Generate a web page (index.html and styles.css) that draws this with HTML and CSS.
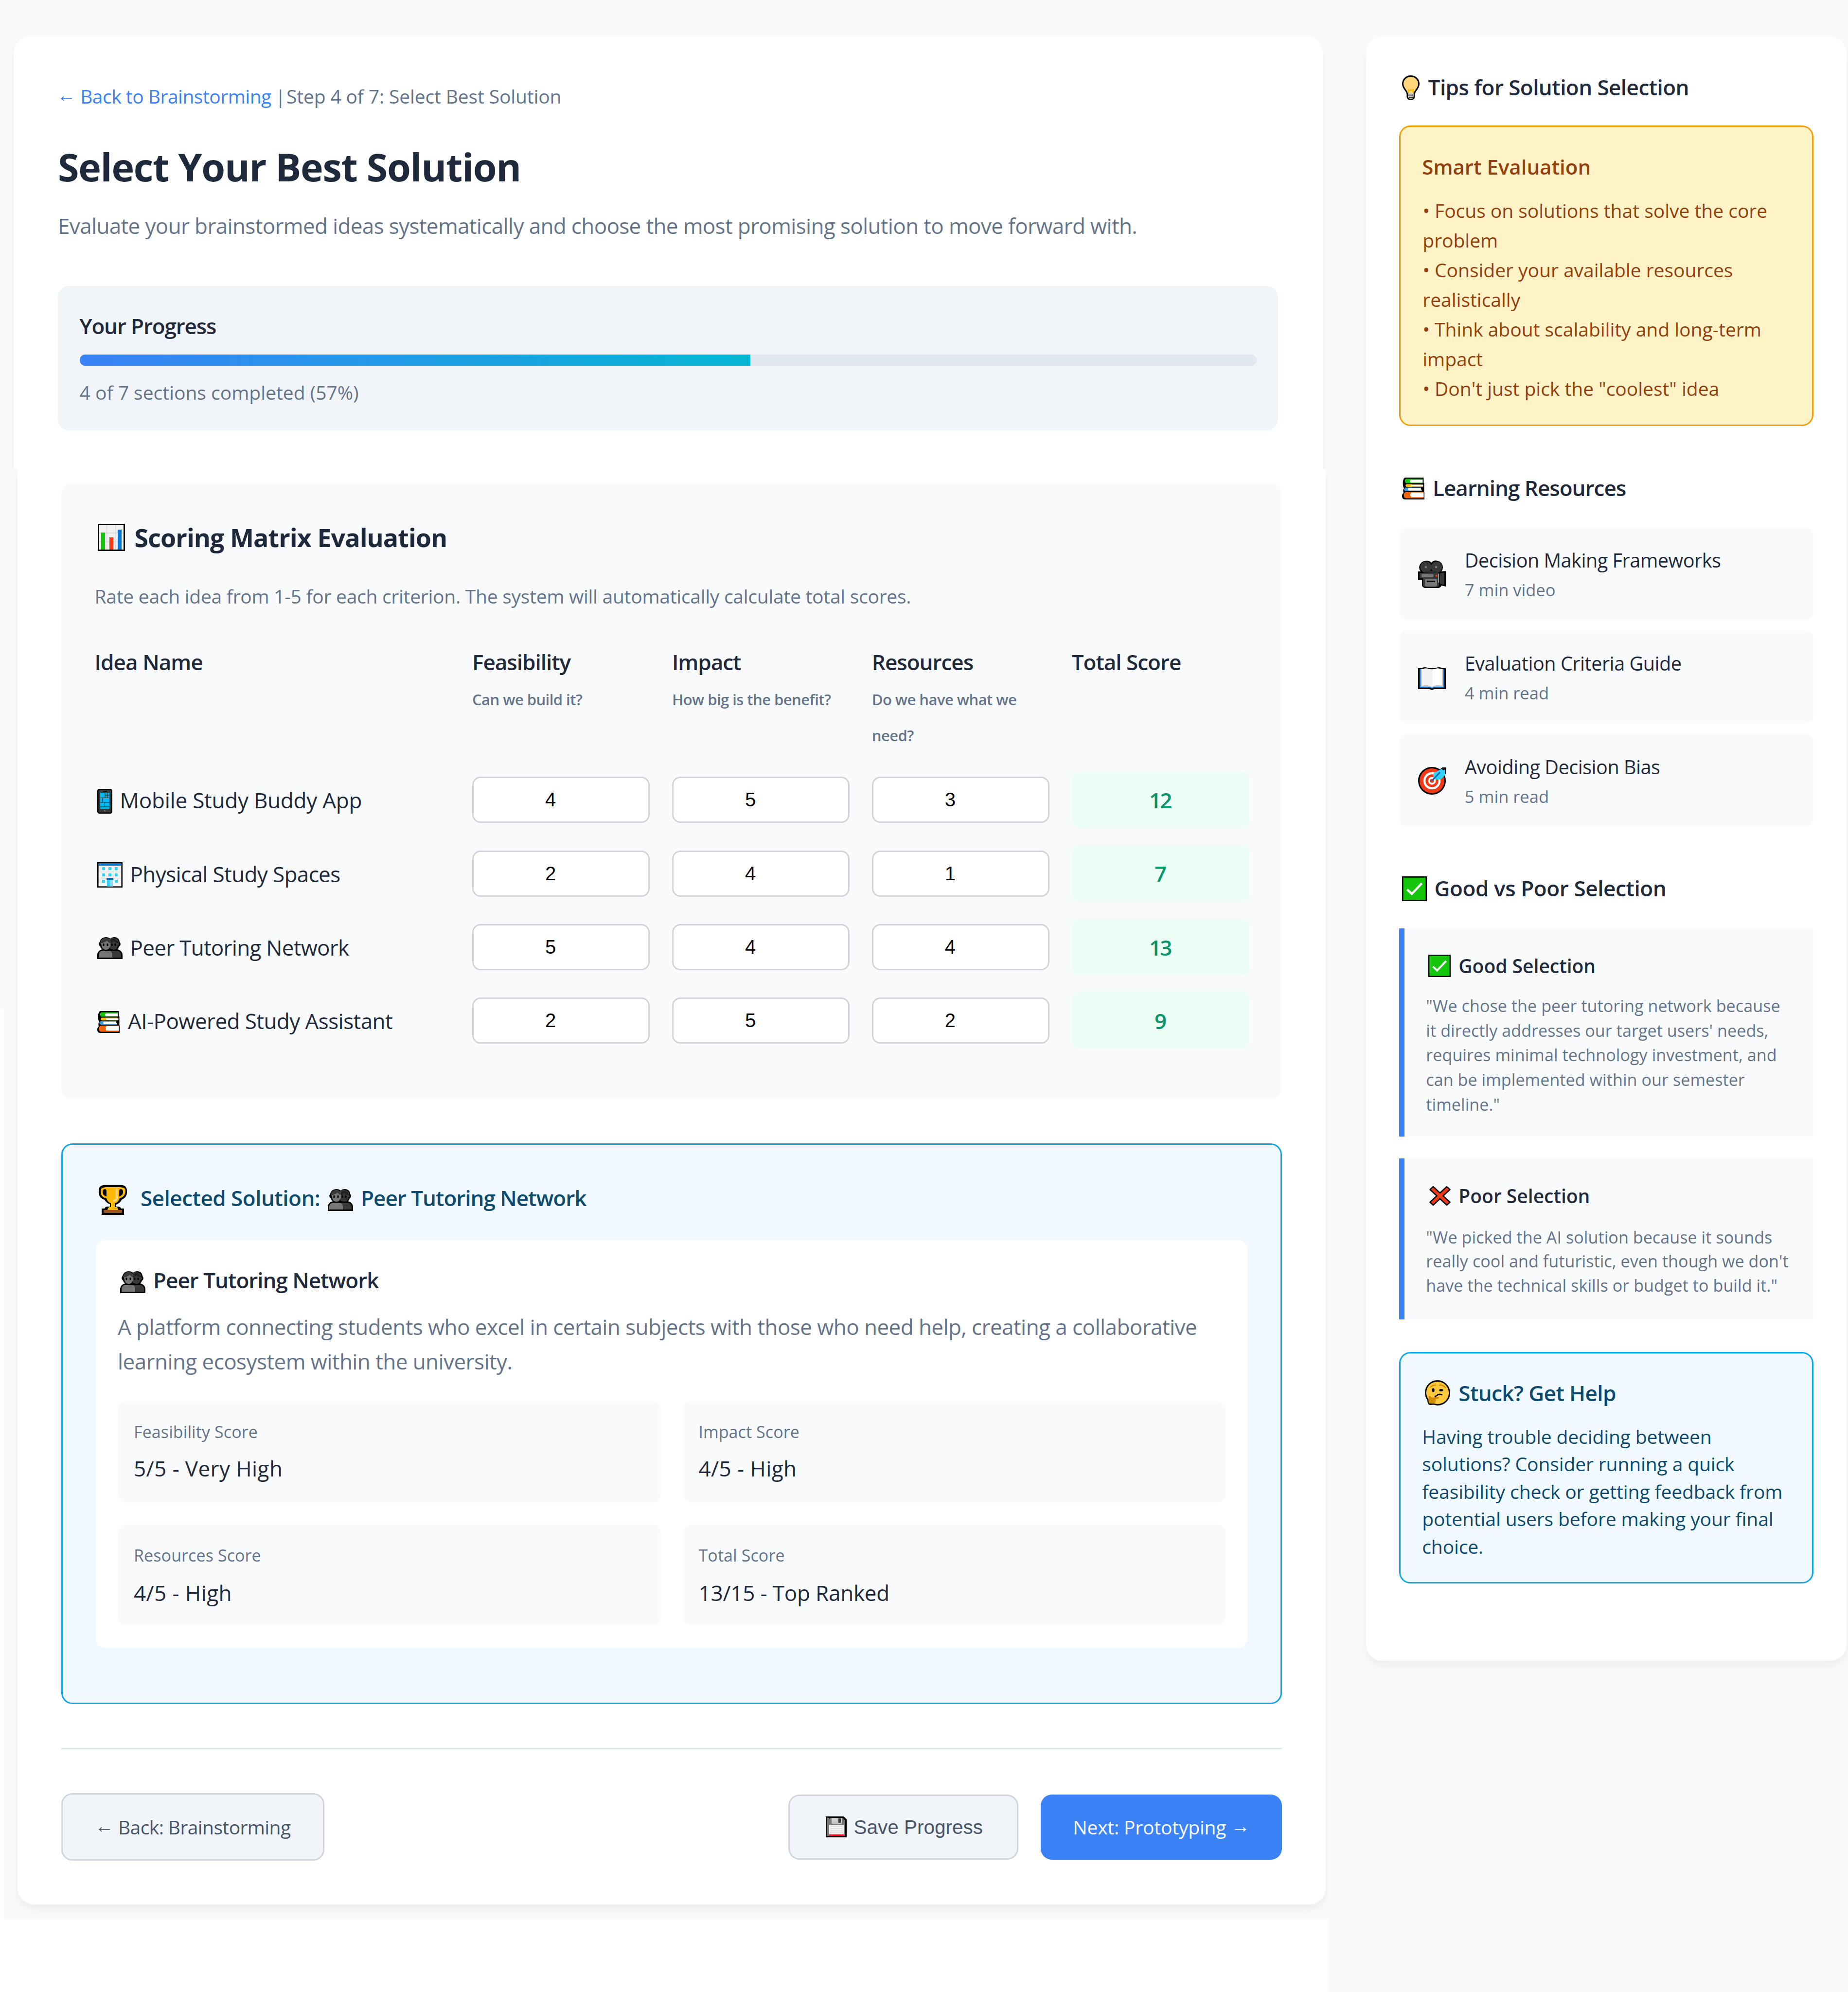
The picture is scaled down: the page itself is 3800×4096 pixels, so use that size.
FILE: index.html
```html
<!DOCTYPE html>
<html lang="en">
<head>
<meta charset="utf-8">
<title>Select Best Solution</title>
<link rel="stylesheet" href="styles.css">
</head>
<body>
<svg class="sprite" xmlns="http://www.w3.org/2000/svg">
  <symbol id="bulb" viewBox="0 0 36 51" preserveAspectRatio="none">
    <path d="M18 1.5C8.5 1.5 1.5 8.500 1.500 17.500c0 6 3 9.500 6 13.500 2.500 3.500 3.500 5 3.500 8.500v4.500c0 3.500 3.500 5.500 7 5.500s7-2 7-5.500v-4.500c0-3.500 1-5 3.500-8.500 3-4 6-7.500 6-13.500C34.500 8.500 27.500 1.500 18 1.500z" fill="#ffd679" stroke="#000" stroke-width="3"/>
    <path d="M13 28v9M23 28v9M13 29.500l2.500 2 2.500-2 2.500 2 2.500-2" fill="none" stroke="#ffb900" stroke-width="2.200"/>
    <path d="M12.500 37h11v8q-5.500 5-11 0z" fill="#ccc"/>
    <path d="M11 40.500h11M14 45h11" stroke="#000" stroke-width="1.400"/>
  </symbol>
  <symbol id="books" viewBox="0 0 46 45" preserveAspectRatio="none">
    <path d="M6 0h38v11h1v19h-1l2 0v15H6c-4 0-6-3-6-7 0-3 1-5 3-6-1-4-1-8 1-10C1 19 0 3 6 0z" fill="#000"/>
    <path d="M8 2.500h34v1.700H18q-4 3 0 6h24v1.300H8q-5-4.500 0-9z" fill="#16c60c"/>
    <path d="M18 4.500h24v6H18q-5-3 0-6z" fill="#fff"/>
    <path d="M9 13.500h33v1H20q-3 2.200 0 4h22v.8H9q-4-3 0-5.800z" fill="#ffb900"/>
    <path d="M19 14.700h24v3.800H19q-3-2 0-3.800z" fill="#fff"/>
    <path d="M7 20.500h32v1H14q-4 2.500 0 5h26v1.500H7q-6-3.700 0-7.500z" fill="#3a96dd"/>
    <path d="M14 21.500h24l2 5.300H14q-5-2.500 0-5.300z" fill="#fff"/>
    <path d="M8 29.700h36v1.200H19q-5 4.500 0 9h25v2.500H8c-6 0-6-12.500 0-12.700z" fill="#f7630c"/>
    <path d="M19 30.800h25v9.400H19q-5-4.700 0-9.400z" fill="#fff"/>
  </symbol>
  <symbol id="camera" viewBox="0 0 57 57" preserveAspectRatio="none">
    <path d="M15 1q8-1 12 4 5-6 13-4 11 3 11 14-1 6-3 8l9-1v32l-9-2q-1 4-6 5H14q-5-1-6-5V40H0V23h5q-3-4-3-9Q4 3 15 1z" fill="#000"/>
    <circle cx="16" cy="14" r="11.500" fill="#383838"/><circle cx="38" cy="14" r="11.500" fill="#383838"/>
    <path d="M16 22h24v5H16z" fill="#383838"/><path d="M15 24.500h23" stroke="#222" stroke-width="2.500"/>
    <circle cx="16" cy="14" r="2.500" fill="#777"/><circle cx="37" cy="14" r="2.500" fill="#777"/>
    <path d="M3 26h40v11H3z" fill="#383838"/><rect x="7" y="28.500" width="25" height="6.500" rx="3" fill="#767676"/>
    <path d="M10 37h33v14q-1 4-4 4H16q-5 0-6-4z" fill="#383838"/>
    <path d="M14 39h25v13q-2 2-4 2H18q-3 0-4-2z" fill="#767676"/><path d="M18 43.500h17" stroke="#111" stroke-width="3"/>
    <circle cx="37.500" cy="32" r="2" fill="#f03a17"/>
    <path d="M42.500 28v18" stroke="#ccc" stroke-width="1.500"/><path d="M45 27l9-2v26l-9-3z" fill="#383838"/>
  </symbol>
  <symbol id="openbook" viewBox="0 0 57 47" preserveAspectRatio="none">
    <path d="M0 2h6q8-4 16 0h13q8-4 16 0h6v43H33q-4.500 3-9 0H0z" fill="#000"/>
    <path d="M3 4.500h51V42H32q-3.500 3-7 0H3z" fill="#0078d7"/>
    <path d="M5 4h47v36H32l-3.500 2-3.500-2H5z" fill="#ccc"/>
    <path d="M8 4q8-3 14-.5 5 1 6.500 3.500V40Q25 36 8 37.500z" fill="#f2f2f2"/>
    <path d="M49 4q-8-3-14-.5-5 1-6.500 3.500V40Q32 36 49 37.500z" fill="#fff"/>
  </symbol>
  <symbol id="target" viewBox="0 0 57 57" preserveAspectRatio="none">
    <circle cx="28.500" cy="28.500" r="27" fill="#f03a17" stroke="#000" stroke-width="3"/>
    <path d="M38 10L50 1h7v13l-5 8z" fill="#000"/>
    <circle cx="28.500" cy="28.500" r="15.500" fill="none" stroke="#fff" stroke-width="4.500"/>
    <circle cx="28.500" cy="28.500" r="6" fill="#f03a17" stroke="#fff" stroke-width="3.800"/>
    <path d="M31 25l.5-12L49 3.500l1.500 3.500 4.500-1v11q-6 10-16 9z" fill="#31d2f7"/>
    <path d="M28.500 28.500L45 11" stroke="#0063b1" stroke-width="2.800"/>
  </symbol>
  <symbol id="check" viewBox="0 0 51 51" preserveAspectRatio="none">
    <rect x="1.300" y="1.300" width="48.400" height="48.400" fill="#16c60c" stroke="#000" stroke-width="2.600"/>
    <path d="M10.500 27l9.500 9L40.500 14.500" fill="none" stroke="#fff" stroke-width="4.500"/>
  </symbol>
  <symbol id="cross" viewBox="0 0 44 42" preserveAspectRatio="none">
    <path d="M8 2l14 13L36 2l6.500 6-14 13 14 13-6.500 6-14-13L8 40l-6.500-6 14-13-14-13z" fill="#f03a17" stroke="#000" stroke-width="2.400" stroke-linejoin="round"/>
  </symbol>
  <symbol id="thinking" viewBox="0 0 52 52" preserveAspectRatio="none">
    <path d="M26 1.500C12 1.500 1.500 12 1.500 26c0 7 3 12 5 15 0 5 1 8 4 8.500l8-.5c3 1 5 1.500 7.500 1.500 14 0 24.500-11 24.500-24.500S39.500 1.500 26 1.500z" fill="#ffc83d" stroke="#000" stroke-width="2.800"/>
    <path d="M12 14q4-4 10-4M30 10q6-1 12 5" fill="none" stroke="#d18b00" stroke-width="2.500" stroke-linecap="round"/>
    <ellipse cx="17" cy="20.500" rx="2.700" ry="4" fill="#000"/><ellipse cx="33.500" cy="20.500" rx="4.200" ry="2.600" fill="#000"/>
    <path d="M21 34q7-7 14-4" fill="none" stroke="#000" stroke-width="2.600" stroke-linecap="round"/>
    <path d="M8 33q2-2 4 1l3 2 12-2q3 1 1 4l-6 1q1 9-6 9h-4c-5 0-5-4-4-15z" fill="#d18b00"/>
  </symbol>
  <symbol id="chart" viewBox="0 0 56 56" preserveAspectRatio="none">
    <rect x="1.500" y="1.500" width="53" height="53" fill="#f2f2f2" stroke="#000" stroke-width="3"/>
    <path d="M18.500 3v50M37 3v50M3 19h50M3 37h50" stroke="#ddd" stroke-width="1.800"/>
    <path d="M7 18h8v35H7z" fill="#16c60c"/><path d="M24 28h8v25h-8z" fill="#f03a17"/><path d="M41 12h8v41h-8z" fill="#0078d7"/>
  </symbol>
  <symbol id="phone" viewBox="0 0 31 51" preserveAspectRatio="none">
    <rect x="1.200" y="1.200" width="28.600" height="48.600" rx="3" fill="#383838" stroke="#000" stroke-width="2.400"/>
    <path d="M12 5h8" stroke="#000" stroke-width="1.600"/><path d="M6 8h19v33H6z" fill="#00bcf2"/>
    <path d="M6 18.500h19M6 28h19M6 37h19M16 8v11M15.500 28v9M16 13h9M20.500 8v10M11 19v9" stroke="#222" stroke-width="1.200"/>
    <circle cx="15.500" cy="45" r="1.200" fill="#888"/>
  </symbol>
  <symbol id="building" viewBox="0 0 52 52" preserveAspectRatio="none">
    <rect x="1.300" y="1.300" width="49.400" height="49.400" fill="#f2f2f2" stroke="#000" stroke-width="2.600"/>
    <path d="M2.600 2.600h46.800v4.500H2.600z" fill="#0078d7"/><path d="M3 20h46M3 33h46" stroke="#ddd"/>
    <path d="M10 10h6v6h-6zM23 10h6v6h-6zM36 10h6v6h-6zM10 23h6v6h-6zM23 23h6v6h-6zM36 23h6v6h-6zM10 36h6v6h-6zM36 36h6v6h-6z" fill="#31d2f7"/>
    <path d="M20 34h12v16H20z" fill="#31d2f7"/><path d="M26 34h6v16h-6z" fill="#83deff"/><path d="M19 32.500h14v3.500H19z" fill="#0063b1"/>
  </symbol>
  <symbol id="people" viewBox="0 0 52 45" preserveAspectRatio="none">
    <path d="M18 0q5 0 8.500 3Q30 0 35 0c8 0 11 6 11 10 3 3 2 8-1 9-1 3-2 5-4 6 7 1 11 6 11 12v8H0v-8c0-6 4-11 11-12-3-1-4-3-5-6-3-2-4-6-1-9C6 4 11 0 18 0z" fill="#000"/>
    <path d="M24 5q5-4 11-3c5 1 9 4 9 9l1 5-3 2c-1 5-4 8-8 8l-8-2z" fill="#383838"/>
    <path d="M26 8q4-6 10-5l8 9q-8 0-10-4-3 5-8 5z" fill="#222"/>
    <path d="M7 10Q9 2 18 2q6 0 9 6v10c-2 5-5 8-9 8-5 0-8-3-9-8z" fill="#767676"/>
    <path d="M6 13Q7 3 17 2q8 0 10 8l-1 2q-4-1-6-5-3 4-14 6z" fill="#3a3a3a"/>
    <path d="M26 28h13c7 0 10 4 10 9v5H26z" fill="#383838"/>
    <path d="M3 42v-5c0-6 4-9 9-9h11c5 0 8 3 8 8v6z" fill="#767676"/>
    <g fill="#000"><ellipse cx="13" cy="15.500" rx="1.700" ry="2.800"/><ellipse cx="21" cy="15.500" rx="1.700" ry="2.800"/><ellipse cx="30" cy="15.500" rx="1.700" ry="2.800"/><ellipse cx="37" cy="15.500" rx="1.700" ry="2.800"/></g>
  </symbol>
  <symbol id="trophy" viewBox="0 0 58 61" preserveAspectRatio="none">
    <path d="M9 0h40q9 1 9 12v4q-1 10-11 14-2 6-11 10v4h5q4 1 5 4h6v13H6V48h6q1-3 4-4h7v-5q-7-2-11-9Q1 27 0 16v-4Q0 1 9 0z" fill="#000"/>
    <path d="M15 4h28l7 1q5 1 5 8-1 11-12 14-3 9-10 10v8h4q2 1 3 6H18q1-5 4-6h3v-8q-7-2-9-10Q4 25 4 13q0-7 5-8z" fill="#ffb900"/>
    <path d="M13 8q3 0 3 6v9Q7 21 8 12q1-4 5-4zM45 8q-3 0-3 6v9q9-2 8-11-1-4-5-4z" fill="#000"/>
    <path d="M37 9v17q-1 6-6 6" fill="none" stroke="#ffd679" stroke-width="4.500" stroke-linecap="round"/>
    <path d="M10 51h38v6H10z" fill="#9c5b25"/>
  </symbol>
  <symbol id="floppy" viewBox="0 0 43 43" preserveAspectRatio="none">
    <path d="M0 0h37l6 6v37H0z" fill="#000"/><path d="M3 3h32l4.500 5v32H3z" fill="#767676"/>
    <path d="M12 3h21v12H12z" fill="#ccc"/><path d="M26 4h5v9h-5z" fill="#383838"/><path d="M6 3h2.500v3H6z" fill="#222"/>
    <path d="M7 17h30v20H7z" fill="#f2f2f2"/><path d="M10 20.500h24M10 25h24M10 29.500h24M10 33.500h24" stroke="#ddd" stroke-width="1.300"/>
    <path d="M7 37h30v3H7z" fill="#e81224"/>
  </symbol>
</svg>

<div class="layout">
  <main class="workspace">
    <section class="head-panel">
      <nav class="breadcrumb"><a class="back-link"><span class="arrow">←</span> Back to Brainstorming</a><span class="bar">|</span><span class="step">Step 4 of 7: Select Best Solution</span></nav>
      <h1 class="page-title">Select Your Best Solution</h1>
      <p class="subtitle">Evaluate your brainstormed ideas systematically and choose the most promising solution to move forward with.</p>
      <div class="progress">
        <div class="progress-title">Your Progress</div>
        <div class="progress-bar"><div class="progress-fill" style="width:57%"></div></div>
        <div class="progress-text">4 of 7 sections completed (57%)</div>
      </div>
    </section>

    <section class="body-panel">
      <div class="matrix">
        <h2 class="matrix-title"><svg class="i-chart"><use href="#chart"/></svg>Scoring Matrix Evaluation</h2>
        <p class="matrix-desc">Rate each idea from 1-5 for each criterion. The system will automatically calculate total scores.</p>
        <div class="grid grid-head">
          <div class="col-title idea-title">Idea Name</div>
          <div><div class="col-title">Feasibility</div><div class="col-sub">Can we build it?</div></div>
          <div><div class="col-title">Impact</div><div class="col-sub">How big is the benefit?</div></div>
          <div><div class="col-title">Resources</div><div class="col-sub">Do we have what we<br>need?</div></div>
          <div class="col-title">Total Score</div>
        </div>
        <div class="rows">
          <div class="grid row">
            <div class="idea idea-app"><svg class="i-phone"><use href="#phone"/></svg>Mobile Study Buddy App</div>
            <input class="score" type="text" value="4"><input class="score" type="text" value="5"><input class="score" type="text" value="3">
            <div class="total">12</div>
          </div>
          <div class="grid row">
            <div class="idea idea-space"><svg class="i-building"><use href="#building"/></svg>Physical Study Spaces</div>
            <input class="score" type="text" value="2"><input class="score" type="text" value="4"><input class="score" type="text" value="1">
            <div class="total">7</div>
          </div>
          <div class="grid row">
            <div class="idea idea-peer"><svg class="i-people"><use href="#people"/></svg>Peer Tutoring Network</div>
            <input class="score" type="text" value="5"><input class="score" type="text" value="4"><input class="score" type="text" value="4">
            <div class="total">13</div>
          </div>
          <div class="grid row">
            <div class="idea idea-ai"><svg class="i-books"><use href="#books"/></svg>AI-Powered Study Assistant</div>
            <input class="score" type="text" value="2"><input class="score" type="text" value="5"><input class="score" type="text" value="2">
            <div class="total">9</div>
          </div>
        </div>
      </div>

      <div class="selected">
        <h3 class="selected-title"><svg class="i-trophy"><use href="#trophy"/></svg><span class="selected-label">Selected Solution:</span><svg class="i-people"><use href="#people"/></svg><span class="selected-name">Peer Tutoring Network</span></h3>
        <div class="solution">
          <h4 class="solution-title"><svg class="i-people"><use href="#people"/></svg>Peer Tutoring Network</h4>
          <p class="solution-desc">A platform connecting students who excel in certain subjects with those who need help, creating a collaborative<br>learning ecosystem within the university.</p>
          <div class="metrics">
            <div class="metric"><div class="metric-label">Feasibility Score</div><div class="metric-value">5/5 - Very High</div></div>
            <div class="metric"><div class="metric-label">Impact Score</div><div class="metric-value">4/5 - High</div></div>
            <div class="metric"><div class="metric-label">Resources Score</div><div class="metric-value">4/5 - High</div></div>
            <div class="metric"><div class="metric-label">Total Score</div><div class="metric-value metric-total">13/15 - Top Ranked</div></div>
          </div>
        </div>
      </div>

      <div class="actions">
        <a class="btn btn-back"><span><span class="arrow">←</span> Back: Brainstorming</span></a>
        <button class="btn btn-save"><svg class="i-floppy"><use href="#floppy"/></svg>Save Progress</button>
        <a class="btn btn-next"><span>Next: Prototyping <span class="arrow">→</span></span></a>
      </div>
    </section>
  </main>

  <aside class="sidebar">
    <h3 class="side-title tips-title"><svg class="i-bulb"><use href="#bulb"/></svg>Tips for Solution Selection</h3>
    <div class="tips">
      <h4 class="tips-head">Smart Evaluation</h4>
      <p class="tips-text">• Focus on solutions that solve the core<br>problem<br>• Consider your available resources<br>realistically<br>• Think about scalability and long-term<br>impact<br>• Don't just pick the "coolest" idea</p>
    </div>

    <h3 class="side-title learning-title"><svg class="i-books"><use href="#books"/></svg>Learning Resources</h3>
    <div class="resources">
      <div class="resource"><svg class="i-camera"><use href="#camera"/></svg><div><div class="resource-name">Decision Making Frameworks</div><div class="resource-meta">7 min video</div></div></div>
      <div class="resource"><svg class="i-openbook"><use href="#openbook"/></svg><div><div class="resource-name">Evaluation Criteria Guide</div><div class="resource-meta">4 min read</div></div></div>
      <div class="resource"><svg class="i-target"><use href="#target"/></svg><div><div class="resource-name">Avoiding Decision Bias</div><div class="resource-meta">5 min read</div></div></div>
    </div>

    <h3 class="side-title versus-title"><svg class="i-check"><use href="#check"/></svg>Good vs Poor Selection</h3>
    <div class="example example-good">
      <h4 class="example-title"><svg class="i-check-sm"><use href="#check"/></svg>Good Selection</h4>
      <p class="example-text">"We chose the peer tutoring network because<br>it directly addresses our target users' needs,<br>requires minimal technology investment, and<br>can be implemented within our semester<br>timeline."</p>
    </div>
    <div class="example example-poor">
      <h4 class="example-title"><svg class="i-cross"><use href="#cross"/></svg>Poor Selection</h4>
      <p class="example-text">"We picked the AI solution because it sounds<br>really cool and futuristic, even though we don't<br>have the technical skills or budget to build it."</p>
    </div>

    <div class="help">
      <h4 class="help-title"><svg class="i-thinking"><use href="#thinking"/></svg>Stuck? Get Help</h4>
      <p class="help-text">Having trouble deciding between<br>solutions? Consider running a quick<br>feasibility check or getting feedback from<br>potential users before making your final<br>choice.</p>
    </div>
  </aside>
</div>
</body>
</html>
```
FILE: styles.css
```css
* { box-sizing: border-box; margin: 0; padding: 0; }
body { background: #f8fafc; color: #1e293b; font-family: "Open Sans", "Noto Sans", sans-serif; overflow: hidden; white-space: nowrap; }
h1, h2, h3, h4 { font-weight: 600; }
svg { flex: none; display: block; }
.sprite { position: absolute; width: 0; height: 0; }
.arrow { position: relative; top: -4px; }

.layout { display: flex; align-items: flex-start; height: 4096px; }
.workspace {
  width: 2731px; height: 4096px; flex: none;
  background: linear-gradient(#fff, #fff) 0 3947px / 2731px 149px no-repeat, linear-gradient(#fff, #fff) 0 2074px / 7px 2022px no-repeat;
}

/* header panel */
.head-panel { width: 2692px; height: 889px; margin: 75px 0 0 28px; padding: 91px 92px 0 91px; background: #fff; border-radius: 34px 34px 0 0; box-shadow: 0 11px 17px rgba(0,0,0,.05); clip-path: inset(-40px -40px 0 -40px); }
.breadcrumb { display: flex; font-size: 39px; line-height: 64px; color: #64748b; }
.back-link { width: 449px; margin-left: -2px; color: #3b82f6; letter-spacing: -.5px; }
.bar { width: 23px; }
.step { letter-spacing: -.15px; }
.page-title { margin-top: 65px; font-size: 79px; font-weight: 700; line-height: 96px; letter-spacing: -1.300px; }
.subtitle { margin-top: 37px; font-size: 44px; line-height: 72px; letter-spacing: -.645px; color: #64748b; }
.progress { margin-top: 88px; height: 296.500px; padding: 45.500px 44.500px; background: #f1f5f9; border-radius: 23px; }
.progress-title { font-size: 44px; font-weight: 600; line-height: 72px; letter-spacing: -1.15px; }
.progress-bar { margin-top: 23.500px; height: 22.500px; background: #e2e8f0; border-radius: 11px; overflow: hidden; }
.progress-fill { height: 100%; background: linear-gradient(90deg, #3b82f6, #06b6d4); }
.progress-text { margin-top: 23.500px; font-size: 39px; line-height: 64px; color: #64748b; }

/* main panel */
.body-panel { width: 2690px; height: 2952px; margin-left: 36px; padding: 29.500px 90px 0; background: #fff; border-radius: 0 0 34px 34px; box-shadow: 0 11px 17px rgba(0,0,0,.05); clip-path: inset(0 -5px -31px -40px); }
.matrix { height: 1266.700px; padding: 69px 68.500px 0; background: #f8fafc; border-radius: 23px; }
.matrix-title { display: flex; align-items: center; font-size: 52px; font-weight: 700; line-height: 84px; letter-spacing: -.95px; }
.i-chart { width: 56px; height: 56px; margin: 0 20px 0 6px; }
.matrix-desc { margin-top: 47px; font-size: 39px; line-height: 64px; letter-spacing: -.27px; color: #64748b; }
.grid { display: grid; grid-template-columns: 731px repeat(4, 365.400px); column-gap: 45.500px; }
.grid-head { margin-top: 67px; }
.col-title { font-size: 44px; font-weight: 600; line-height: 72px; letter-spacing: -1px; }
.idea-title { letter-spacing: -.9px; }
.col-sub { margin-top: 5.700px; font-size: 31px; font-weight: 600; line-height: 73.500px; letter-spacing: -.55px; color: #64748b; }
.rows { display: grid; row-gap: 33.800px; margin-top: 36.800px; }
.row { align-items: center; height: 117.500px; }
.idea { display: flex; align-items: center; padding-top: 1px; font-size: 44px; line-height: 72px; }
.idea svg { margin-left: 5px; position: relative; top: 2px; }
.idea-app { letter-spacing: -.24px; }
.idea-space { letter-spacing: -.62px; }
.idea-peer { letter-spacing: -.73px; }
.idea-ai { letter-spacing: -.57px; }
.i-phone { width: 31px; height: 51px; margin-right: 16px; }
.i-building { width: 52px; height: 52px; margin-right: 16px; }
.i-people { width: 52px; height: 45px; margin-right: 16px; }
.i-books { width: 46.500px; height: 45px; margin-right: 17px; }
.score { width: 100%; height: 95px; padding: 0 43px 0 0; border: 3px solid #d1d5db; border-radius: 17px; background: #fff; color: #000; font-family: "Liberation Sans", Arial, sans-serif; font-size: 40px; text-align: center; }
.total { height: 117.500px; border-radius: 17px; background: #ecfdf5; color: #059669; font-size: 44px; font-weight: 600; line-height: 119px; letter-spacing: -2.500px; text-indent: -2px; text-align: center; }

.selected { margin-top: 90.400px; height: 1153.200px; padding: 73.600px 68px 0; border: 3px solid #0ea5e9; border-radius: 23px; background: #f0f9ff; }
.selected-title { display: flex; align-items: center; font-size: 44px; line-height: 72px; color: #0c4a6e; }
.selected-title svg { position: relative; top: 4px; }
.i-trophy { width: 58px; height: 61px; margin: 0 28px 0 6px; }
.selected-label { width: 385px; letter-spacing: -.5px; }
.selected-name { letter-spacing: -1px; }
.solution { margin-top: 51px; height: 837.700px; padding: 46.300px 45px 0; border-radius: 20px; background: #fff; }
.solution-title { display: flex; align-items: center; font-size: 44px; line-height: 72px; letter-spacing: -1px; }
.solution-title svg { margin-left: 5px; position: relative; top: 4px; }
.solution-desc { margin-top: 25px; font-size: 44px; line-height: 70.800px; letter-spacing: -.565px; color: #64748b; }
.metrics { display: grid; grid-template-columns: 1fr 1fr; grid-auto-rows: 207.800px; gap: 45.600px 45px; margin-top: 46.100px; }
.metric { padding: 35px 33px 0; border-radius: 17px; background: #f8fafc; }
.metric-label { font-size: 34px; line-height: 56px; color: #64748b; letter-spacing: .1px; }
.metric-value { margin-top: 10.600px; font-size: 44px; line-height: 72px; letter-spacing: .4px; }
.metric-total { letter-spacing: -.2px; }
.metric:nth-child(n+3) .metric-value { margin-top: 13.500px; }

.actions { display: flex; align-items: center; margin-top: 90.400px; padding-top: 90.300px; border-top: 3px solid #e2e8f0; }
.btn { display: flex; align-items: center; justify-content: center; height: 134px; border-radius: 23px; font-size: 39px; line-height: 64px; }
.btn-back { width: 540.600px; height: 138.600px; margin-right: auto; border: 3px solid #d1d5db; background: #f1f5f9; color: #475569; letter-spacing: -.6px; }
.btn-save { width: 473px; border: 3px solid #d1d5db; background: #f1f5f9; color: #475569; font-family: "Liberation Sans", Arial, sans-serif; font-size: 40.500px; }
.i-floppy { width: 43px; height: 43px; margin: 0 15px 0 3px; }
.btn-next { width: 495.700px; margin-left: 46px; background: #3b82f6; color: #fff; letter-spacing: -.2px; }

/* sidebar */
.sidebar { width: 987.500px; height: 3339.700px; margin: 75px 0 0 78px; padding: 67.600px 68px 0 68.300px; flex: none; background: #fff; border-radius: 34px; box-shadow: 0 11px 17px rgba(0,0,0,.05); }
.side-title { display: flex; align-items: center; font-size: 44px; line-height: 72px; }
.side-title svg { margin-left: 5.300px; position: relative; top: 1.500px; }
.tips-title { letter-spacing: -.55px; }
.i-bulb { width: 36px; height: 51px; margin-right: 18px; }
.tips { margin-top: 43.800px; height: 617.400px; padding: 47px 44px 0; border: 3px solid #f59e0b; border-radius: 23px; background: #fef3c7; color: #92400e; }
.tips-head { font-size: 42px; line-height: 70px; }
.tips-text { margin-top: 23.600px; padding-left: 1px; font-size: 39px; line-height: 61px; letter-spacing: -.02px; }
.learning-title { margin-top: 90.800px; letter-spacing: -1px; }
.resources { display: grid; grid-auto-rows: 189.600px; row-gap: 23.200px; margin-top: 46px; }
.resource { display: flex; padding: 38px 39px 0; border-radius: 17px; background: #f8fafc; }
.resource svg { width: 57px; height: 57px; margin: 29px 38.500px 0 0; }
.resource .i-openbook { height: 47px; margin-top: 37px; }
.resource-name { font-size: 39.500px; line-height: 58px; letter-spacing: -.45px; }
.resource-meta { margin-top: 4px; font-size: 34.500px; line-height: 56px; color: #64748b; }
.versus-title { margin-top: 90.500px; letter-spacing: -.4px; }
.i-check { width: 51px; height: 51px; margin-right: 16px; }
.example { padding: 44.800px 44px 0; border-left: 11px solid #3b82f6; background: #f8fafc; }
.example-good { margin-top: 46.900px; height: 428px; }
.example-poor { margin-top: 45px; height: 330.600px; }
.example-title { display: flex; align-items: center; font-size: 39px; line-height: 64px; }
.i-check-sm { width: 46px; height: 46px; margin: 0 16px 0 5px; }
.i-cross { width: 44px; height: 42px; margin: 0 16px 0 7px; }
.example-text { margin-top: 25px; font-size: 34px; line-height: 50.700px; letter-spacing: .1px; color: #64748b; }
.example-poor .example-text { margin-top: 29px; line-height: 49.500px; }
.help { margin-top: 67.200px; height: 476.200px; padding: 44.900px 44px 0; border: 3px solid #0ea5e9; border-radius: 23px; background: #f0f9ff; color: #0c4a6e; }
.help-title { display: flex; align-items: center; font-size: 44px; line-height: 72px; letter-spacing: -.58px; }
.i-thinking { width: 52px; height: 52px; margin: 0 17px 0 6px; }
.help-text { margin-top: 25.800px; font-size: 39px; line-height: 56.500px; letter-spacing: -.11px; }
```
